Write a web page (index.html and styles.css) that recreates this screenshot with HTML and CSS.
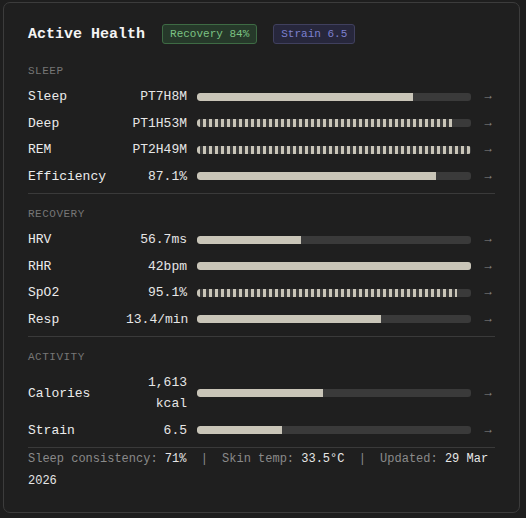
FILE: index.html
```html
<!DOCTYPE html>
<html>
<head>
<meta charset="utf-8">
<link rel="stylesheet" href="styles.css">
</head>
<body>
<div class="card">
  <div class="header">
    <span class="title">Active Health</span>
    <span class="badge badge-green">Recovery 84%</span>
    <span class="badge badge-blue">Strain 6.5</span>
  </div>

  <div class="section first">
    <div class="section-title">SLEEP</div>
    <div class="rows">
      <div class="row"><span class="label">Sleep</span><span class="value">PT7H8M</span><div class="track"><div class="fill" style="width:79%"></div></div><span class="arrow">→</span></div>
      <div class="row"><span class="label">Deep</span><span class="value">PT1H53M</span><div class="track"><div class="fill striped" style="width:93%"></div></div><span class="arrow">→</span></div>
      <div class="row"><span class="label">REM</span><span class="value">PT2H49M</span><div class="track"><div class="fill striped" style="width:100%"></div></div><span class="arrow">→</span></div>
      <div class="row"><span class="label">Efficiency</span><span class="value">87.1%</span><div class="track"><div class="fill" style="width:87.1%"></div></div><span class="arrow">→</span></div>
    </div>
  </div>

  <div class="section">
    <div class="section-title">RECOVERY</div>
    <div class="rows">
      <div class="row"><span class="label">HRV</span><span class="value">56.7ms</span><div class="track"><div class="fill" style="width:38%"></div></div><span class="arrow">→</span></div>
      <div class="row"><span class="label">RHR</span><span class="value">42bpm</span><div class="track"><div class="fill" style="width:100%"></div></div><span class="arrow">→</span></div>
      <div class="row"><span class="label">SpO2</span><span class="value">95.1%</span><div class="track"><div class="fill striped" style="width:95%"></div></div><span class="arrow">→</span></div>
      <div class="row"><span class="label">Resp</span><span class="value">13.4/min</span><div class="track"><div class="fill" style="width:67%"></div></div><span class="arrow">→</span></div>
    </div>
  </div>

  <div class="section">
    <div class="section-title">ACTIVITY</div>
    <div class="rows">
      <div class="row"><span class="label">Calories</span><span class="value">1,613 kcal</span><div class="track"><div class="fill" style="width:46%"></div></div><span class="arrow">→</span></div>
      <div class="row"><span class="label">Strain</span><span class="value">6.5</span><div class="track"><div class="fill" style="width:31%"></div></div><span class="arrow">→</span></div>
    </div>
  </div>

  <div class="footer">
    <span class="f-label">Sleep consistency:</span> <span class="f-val">71%</span> <span class="sep">|</span> <span class="f-label">Skin temp:</span> <span class="f-val">33.5°C</span> <span class="sep">|</span> <span class="f-label">Updated:</span> <span class="f-val">29 Mar 2026</span>
  </div>
</div>
</body>
</html>
```

FILE: styles.css
```css
html, body {
  margin: 0;
  padding: 0;
  background: #1e1e1e;
}
body {
  font-family: "Liberation Mono", "Courier New", monospace;
  color: #e6e6e6;
}
.card {
  box-sizing: border-box;
  width: 517px;
  margin: 2px 0 0 3px;
  border: 1px solid #3c3c3c;
  border-radius: 7px;
  background: #1f1f1f;
  padding: 21px 24px 20px 24px;
}
.header {
  display: flex;
  align-items: center;
  gap: 16px;
  height: 20px;
}
.title {
  font-size: 15px;
  font-weight: bold;
  color: #f4f4f4;
  margin-right: 1px;
}
.badge {
  box-sizing: border-box;
  height: 20px;
  line-height: 18px;
  font-size: 11px;
  padding: 0 7px;
  border-radius: 3px;
  border: 1px solid;
}
.badge-green {
  background: #26392a;
  border-color: #3e6b44;
  color: #7cc383;
}
.badge-blue {
  background: #27273c;
  border-color: #40405e;
  color: #7d80cf;
}
.section {
  border-top: 1px solid #3a3a3a;
  padding: 12.5px 0 6px 0;
}
.section.first {
  border-top: none;
  padding-top: 19px;
}
.section-title {
  font-size: 11px;
  line-height: 16px;
  letter-spacing: 0.5px;
  color: #767676;
  margin-bottom: 7px;
}
.rows {
  display: flex;
  flex-direction: column;
  gap: 5.5px;
}
.row {
  display: grid;
  grid-template-columns: 88px 61px 1fr 14px;
  column-gap: 10px;
  align-items: center;
  font-size: 13px;
  line-height: 21px;
}
.label {
  color: #ececec;
}
.value {
  text-align: right;
  color: #e6e6e6;
}
.track {
  height: 8px;
  background: #3a3a3a;
  border-radius: 3px;
  overflow: hidden;
}
.fill {
  height: 100%;
  background: #c9c5b8;
  border-radius: 3px 0 0 3px;
}
.fill.striped {
  background: repeating-linear-gradient(90deg, #c9c5b8 0 3px, transparent 3px 6px);
}
.arrow {
  color: #8a8a8a;
  font-size: 12px;
  text-align: center;
}
.footer {
  border-top: 1px solid #3a3a3a;
  font-size: 12px;
  line-height: 22px;
  padding-top: 0;
  color: #e6e6e6;
}
.f-label {
  color: #8a8a8a;
}
.sep {
  color: #8a8a8a;
  margin: 0 7px;
}
```
